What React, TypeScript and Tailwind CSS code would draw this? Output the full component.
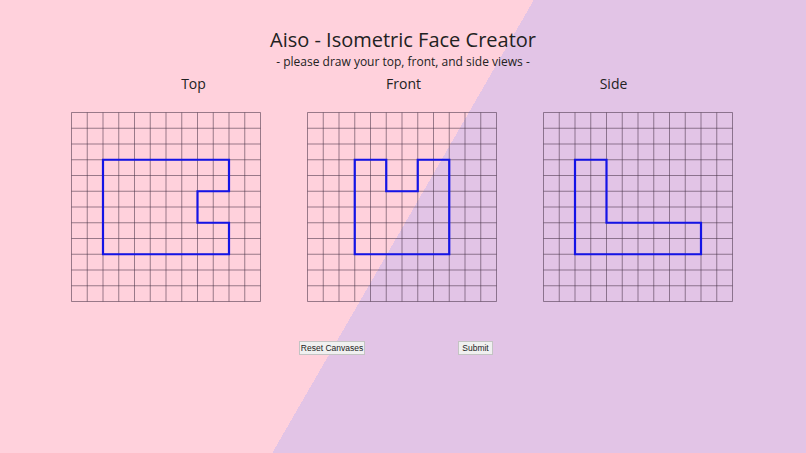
import React from 'react';

type Pt = [number, number];

const CELL = 15.75;
const SIZE = CELL * 12;

const shapes: { label: string; path: Pt[] }[] = [
  {
    label: 'Top',
    path: [[2, 3], [10, 3], [10, 5], [8, 5], [8, 7], [10, 7], [10, 9], [2, 9]],
  },
  {
    label: 'Front',
    path: [[3, 3], [5, 3], [5, 5], [7, 5], [7, 3], [9, 3], [9, 9], [3, 9]],
  },
  {
    label: 'Side',
    path: [[2, 3], [4, 3], [4, 7], [10, 7], [10, 9], [2, 9]],
  },
];

const Grid: React.FC<{ path: Pt[] }> = ({ path }) => {
  const lines = Array.from({ length: 13 }, (_, i) => i * CELL);
  const pts = path.map(([x, y]) => `${x * CELL},${y * CELL}`).join(' ');
  return (
    <svg width={SIZE + 1} height={SIZE + 1} viewBox={`-0.5 -0.5 ${SIZE + 1} ${SIZE + 1}`} className="block">
      {lines.map((p) => (
        <line key={'v' + p} x1={p} y1={0} x2={p} y2={SIZE} stroke="rgba(70,50,70,0.55)" strokeWidth={1} />
      ))}
      {lines.map((p) => (
        <line key={'h' + p} x1={0} y1={p} x2={SIZE} y2={p} stroke="rgba(70,50,70,0.55)" strokeWidth={1} />
      ))}
      <polygon points={pts} fill="none" stroke="#1414e6" strokeWidth={2.2} />
    </svg>
  );
};

export default function App() {
  return (
    <div
      className="w-[806px] h-[453px] overflow-hidden bg-[linear-gradient(120deg,#ffd1dc_50%,#e2c4e6_50%)] text-[#222] flex flex-col items-center"
      style={{ fontFamily: '"Open Sans", "Noto Sans", sans-serif' }}
    >
      <h1 className="mt-[25px] text-[20px] leading-[30px]">Aiso - Isometric Face Creator</h1>
      <p className="text-[12px] leading-[16px] mt-[-1px]">- please draw your top, front, and side views -</p>
      <div className="flex w-[630px] mt-[4px] ml-[1px]">
        {shapes.map((s) => (
          <div key={s.label} className="w-[210px] text-center text-[14px] leading-[20px]">
            {s.label}
          </div>
        ))}
      </div>
      <div className="flex gap-[46px] mt-[18px] ml-[-2px]">
        {shapes.map((s) => (
          <Grid key={s.label} path={s.path} />
        ))}
      </div>
      <div className="flex mt-[39px] w-[194px] justify-between ml-[-14px] font-['Liberation_Sans',sans-serif]">
        <button className="w-[66px] h-[14px] p-0 whitespace-nowrap bg-[#f0f0f0] border border-[#c4c4c4] text-[8.5px] leading-[12px] text-center">
          Reset Canvases
        </button>
        <button className="w-[35px] h-[14px] p-0 whitespace-nowrap bg-[#f0f0f0] border border-[#c4c4c4] text-[8.5px] leading-[12px] text-center">
          Submit
        </button>
      </div>
    </div>
  );
}
